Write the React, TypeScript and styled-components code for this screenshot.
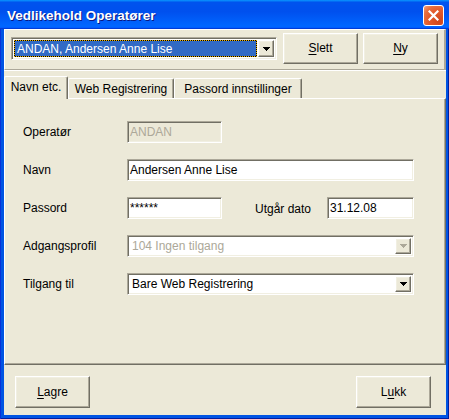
import styled, { createGlobalStyle, css } from "styled-components";
import { FC, ReactNode } from "react";

const GlobalStyle = createGlobalStyle`
	html, body {
		margin: 0;
		padding: 0;
	}
	body {
		font-family: "Liberation Sans", Arial, sans-serif;
		font-size: 12px;
		color: #000;
	}
	* {
		box-sizing: border-box;
	}
`;

// classic 3D edges
const raised = css`
	border: 1px solid;
	border-color: #fff #716f64 #716f64 #fff;
	box-shadow: inset -1px -1px 0 #aca899, inset 1px 1px 0 #f1efe2;
`;

const sunken = css`
	border: 1px solid;
	border-color: #aca899 #fff #fff #aca899;
	box-shadow: inset 1px 1px 0 #716f64, inset -1px -1px 0 #f1efe2;
`;

const Arrow: FC<{ disabled?: boolean }> = ({ disabled }) => (
	<svg width='7' height='4' viewBox='0 0 7 4' shapeRendering='crispEdges'>
		<path
			d='M0 0h7v1H0z M1 1h5v1H1z M2 2h3v1H2z M3 3h1v1H3z'
			fill={disabled ? "#aca899" : "#000"}
		/>
	</svg>
);

const Combo: FC<{ value: string; disabled?: boolean }> = ({
	value,
	disabled,
}) => (
	<SelectBox>
		<SelectText $disabled={disabled}>{value}</SelectText>
		<DropButton>
			<Arrow disabled={disabled} />
		</DropButton>
	</SelectBox>
);

const Button: FC<{ children: ReactNode; h?: number }> = ({ children, h }) => (
	<PushButton $h={h}>{children}</PushButton>
);

const App: FC = () => {
	return (
		<>
			<GlobalStyle />
			<Window>
				<TitleBar>
					<Title>Vedlikehold Operatører</Title>
					<CloseButton aria-label='Lukk'>
						<svg width='11' height='11' viewBox='0 0 11 11'>
							<path
								d='M1.5 1.5 L9.5 9.5 M9.5 1.5 L1.5 9.5'
								stroke='#fff'
								strokeWidth='2.2'
								strokeLinecap='square'
							/>
						</svg>
					</CloseButton>
				</TitleBar>
				<Frame>
					<Body>
						<TopPanel>
							<OperatorCombo>
								<Selected>ANDAN, Andersen Anne Lise</Selected>
								<DropButton>
									<Arrow />
								</DropButton>
							</OperatorCombo>
							<TopButtons>
								<Button h={31}>
									<u>S</u>lett
								</Button>
								<Button h={31}>
									<u>N</u>y
								</Button>
							</TopButtons>
						</TopPanel>

						<TabStrip>
							<Tab $active $w={64}>
								Navn etc.
							</Tab>
							<Tab $w={106}>Web Registrering</Tab>
							<Tab $w={128}>Passord innstillinger</Tab>
						</TabStrip>

						<TabPanel>
							<Form>
								<Row>
									<Label>Operatør</Label>
									<Input $w={95} $disabled>
										ANDAN
									</Input>
								</Row>
								<Row>
									<Label>Navn</Label>
									<Input $w={287}>Andersen Anne Lise</Input>
								</Row>
								<Row>
									<Label>Passord</Label>
									<Input $w={95}>******</Input>
									<SideLabel>Utgår dato</SideLabel>
									<Input $w={87}>31.12.08</Input>
								</Row>
								<Row>
									<Label>Adgangsprofil</Label>
									<Combo value='104 Ingen tilgang' disabled />
								</Row>
								<Row>
									<Label>Tilgang til</Label>
									<Combo value='Bare Web Registrering' />
								</Row>
							</Form>
						</TabPanel>

						<Footer>
							<Button h={32}>
								<u>L</u>agre
							</Button>
							<Button h={32}>
								L<u>u</u>kk
							</Button>
						</Footer>
					</Body>
				</Frame>
			</Window>
		</>
	);
};

export default App;

const Window = styled.div`
	width: 449px;
	height: 419px;
	display: flex;
	flex-direction: column;
	background: #0054e3;
	overflow: hidden;
`;

const TitleBar = styled.div`
	height: 29px;
	flex: none;
	display: flex;
	align-items: center;
	justify-content: space-between;
	padding: 1px 5px 0 7px;
	background: linear-gradient(
		to bottom,
		#0997ff 0,
		#0053ee 8%,
		#0050ee 40%,
		#0066ff 88%,
		#0066ff 93%,
		#005bff 95%,
		#003dd7 96%,
		#003dd7 100%
	);
`;

const Title = styled.span`
	color: #fff;
	font: bold 13.5px "Liberation Sans", Arial, sans-serif;
	text-shadow: 1px 1px 0 #0a1883;
`;

const CloseButton = styled.button`
	width: 21px;
	height: 21px;
	padding: 0;
	border: 1px solid #fff;
	border-radius: 3px;
	display: flex;
	align-items: center;
	justify-content: center;
	background: radial-gradient(
		circle at 80% 80%,
		#d0451a 0%,
		#e35a2c 50%,
		#e8703f 75%,
		#f4a080 100%
	);
`;

const Frame = styled.div`
	flex: 1;
	display: flex;
	padding: 0 4px 4px;
	box-shadow: inset 1px 0 0 #0831d9, inset -1px 0 0 #001ea0,
		inset 0 -1px 0 #001ea0;
`;

const Body = styled.div`
	flex: 1;
	display: flex;
	flex-direction: column;
	background: #ece9d8;
`;

const TopPanel = styled.div`
	height: 41px;
	flex: none;
	display: flex;
	align-items: flex-start;
	padding: 0 6px;
	border-top: 1px solid #fff;
	border-left: 1px solid #fff;
	border-bottom: 1px solid #aca899;
	border-right: 2px solid #aca899;
	box-shadow: 0 1px 0 #fff;
`;

const OperatorCombo = styled.div`
	${sunken};
	width: 266px;
	height: 23px;
	margin-top: 7px;
	display: flex;
	align-items: stretch;
	padding: 2px;
	background: #fff;
`;

const Selected = styled.div`
	flex: 1;
	display: flex;
	align-items: center;
	padding-left: 2px;
	color: #fff;
	white-space: nowrap;
	overflow: hidden;
	border: 1px dotted #f0b400;
	background: linear-gradient(#316ac5, #316ac5) padding-box, #000 border-box;
	margin-right: 1px;
`;

const DropButton = styled.div`
	${raised};
	width: 16px;
	flex: none;
	display: flex;
	align-items: center;
	justify-content: center;
	background: #ece9d8;
`;

const TopButtons = styled.div`
	display: flex;
	gap: 5px;
	margin-left: 6px;
	margin-top: 3px;
`;

const PushButton = styled.div<{ $h?: number }>`
	${raised};
	width: 75px;
	height: ${(p) => p.$h ?? 31}px;
	display: flex;
	align-items: center;
	justify-content: center;
	background: #ece9d8;
	padding-bottom: 1px;

	u {
		text-decoration-thickness: 1px;
		text-underline-offset: 2px;
	}
`;

const TabStrip = styled.div`
	height: 27px;
	flex: none;
	display: flex;
	align-items: flex-end;
	margin-top: 1px;
`;

const Tab = styled.div<{ $active?: boolean; $w: number }>`
	position: relative;
	width: ${(p) => p.$w}px;
	height: ${(p) => (p.$active ? 23 : 20)}px;
	margin-bottom: ${(p) => (p.$active ? -1 : 0)}px;
	z-index: ${(p) => (p.$active ? 1 : 0)};
	display: flex;
	align-items: ${(p) => (p.$active ? "flex-start" : "center")};
	padding-top: ${(p) => (p.$active ? 3 : 0)}px;
	justify-content: center;
	background: #ece9d8;
	border-top: 1px solid #fff;
	border-left: 1px solid #fff;
	border-right: 1px solid #716f64;
	border-radius: 2px 2px 0 0;
	box-shadow: inset -1px 0 0 #aca899;
	white-space: nowrap;
`;

const TabPanel = styled.div`
	height: 267px;
	flex: none;
	border: 1px solid;
	border-color: #fff #716f64 #716f64 #fff;
	box-shadow: inset -1px -1px 0 #aca899;
	padding: 22px 0 0 18px;
`;

const Form = styled.div`
	display: flex;
	flex-direction: column;
	gap: 16px;
`;

const Row = styled.div`
	display: flex;
	align-items: center;
	height: 22px;
`;

const Label = styled.div`
	width: 104px;
	flex: none;
`;

const SideLabel = styled.div`
	width: 72px;
	margin-left: 33px;
	flex: none;
	padding-top: 2px;
`;

const Input = styled.div<{ $w: number; $disabled?: boolean }>`
	${sunken};
	width: ${(p) => p.$w}px;
	height: 22px;
	flex: none;
	display: flex;
	align-items: center;
	padding: 0 3px 0 2px;
	white-space: nowrap;
	overflow: hidden;
	background: ${(p) => (p.$disabled ? "#ece9d8" : "#fff")};
	color: ${(p) => (p.$disabled ? "#aca899" : "#000")};
`;

const SelectBox = styled.div`
	${sunken};
	width: 287px;
	height: 22px;
	flex: none;
	display: flex;
	align-items: stretch;
	padding: 2px;
	background: #fff;
`;

const SelectText = styled.div<{ $disabled?: boolean }>`
	flex: 1;
	display: flex;
	align-items: center;
	padding-left: 2px;
	color: ${(p) => (p.$disabled ? "#aca899" : "#000")};
	white-space: nowrap;
`;

const Footer = styled.div`
	flex: 1;
	display: flex;
	justify-content: space-between;
	align-items: flex-start;
	padding: 11px 15px 0 11px;
`;
